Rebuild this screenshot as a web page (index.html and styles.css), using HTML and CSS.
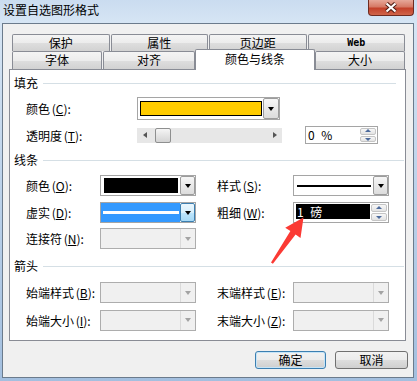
FILE: index.html
```html
<!DOCTYPE html>
<html lang="zh-CN">
<head>
  <meta charset="UTF-8">
  <meta name="viewport" content="width=device-width, initial-scale=1.0">
  <title>设置自选图形格式</title>
  <link rel="stylesheet" href="styles.css">
</head>
<body>

<div class="window">
  <!-- Title Bar -->
  <div class="titlebar">
    <span class="title">设置自选图形格式</span>
    <span class="close-btn">
      <svg width="14" height="11" viewBox="0 0 14 11">
        <path d="M2.5 1.5 L11.5 9.5 M11.5 1.5 L2.5 9.5" stroke="#4e1d14" stroke-width="4.2"/>
        <path d="M2.5 1.5 L11.5 9.5 M11.5 1.5 L2.5 9.5" stroke="#fff" stroke-width="2.2"/>
      </svg>
    </span>
  </div>

  <div class="client">
    <!-- Tabs -->
    <div class="tabs">
      <div class="tab-row back">
        <div class="tab">保护</div>
        <div class="tab">属性</div>
        <div class="tab">页边距</div>
        <div class="tab tab-web">Web</div>
      </div>
      <div class="tab-row front">
        <div class="tab tab-sm">字体</div>
        <div class="tab tab-md">对齐</div>
        <div class="tab tab-active">颜色与线条</div>
        <div class="tab tab-sm">大小</div>
      </div>
    </div>

    <!-- Tab Panel -->
    <div class="panel">
      <!-- Fill -->
      <div class="group-title narrow">填充</div>
      <div class="row fill-color">
        <label class="label-wide">颜色 (<u>C</u>):</label>
        <div class="combo combo-wide">
          <div class="value"><div class="swatch yellow"></div></div>
          <div class="drop"></div>
        </div>
      </div>
      <div class="row fill-alpha">
        <label class="label-wide">透明度 (<u>T</u>):</label>
        <div class="slider">
          <span class="arrow-left"></span>
          <span class="thumb"></span>
          <span class="arrow-right"></span>
        </div>
        <div class="spin spin-pct">
          <div class="spin-text">0 %</div>
          <div class="spin-btns"><span class="up"></span><span class="down"></span></div>
        </div>
      </div>

      <!-- Line -->
      <div class="group-title line-title">线条</div>
      <div class="row row-o">
        <label class="label">颜色 (<u>O</u>):</label>
        <div class="combo">
          <div class="value"><div class="swatch black"></div></div>
          <div class="drop"></div>
        </div>
        <label class="label label-right">样式 (<u>S</u>):</label>
        <div class="combo">
          <div class="value value-line"><div class="solid-line"></div></div>
          <div class="drop"></div>
        </div>
      </div>
      <div class="row row-d">
        <label class="label">虚实 (<u>D</u>):</label>
        <div class="combo combo-focus">
          <div class="value"><div class="dash-line"></div></div>
          <div class="drop"></div>
        </div>
        <label class="label label-right">粗细 (<u>W</u>):</label>
        <div class="spin spin-weight">
          <div class="spin-text"><span class="selected-text">1 磅</span></div>
          <div class="spin-btns"><span class="up"></span><span class="down"></span></div>
        </div>
      </div>
      <div class="row row-n">
        <label class="label">连接符 (<u>N</u>):</label>
        <div class="combo disabled">
          <div class="value"></div>
          <div class="drop"></div>
        </div>
      </div>

      <!-- Arrows -->
      <div class="group-title arrows-title">箭头</div>
      <div class="row row-b">
        <label class="label">始端样式 (<u>B</u>):</label>
        <div class="combo disabled"><div class="value"></div><div class="drop"></div></div>
        <label class="label label-right">末端样式 (<u>E</u>):</label>
        <div class="combo disabled"><div class="value"></div><div class="drop"></div></div>
      </div>
      <div class="row row-i">
        <label class="label">始端大小 (<u>I</u>):</label>
        <div class="combo disabled"><div class="value"></div><div class="drop"></div></div>
        <label class="label label-right">末端大小 (<u>Z</u>):</label>
        <div class="combo disabled"><div class="value"></div><div class="drop"></div></div>
      </div>
    </div>

    <!-- Dialog Buttons -->
    <div class="buttons">
      <button class="btn btn-default">确定</button>
      <button class="btn btn-cancel">取消</button>
    </div>
  </div>

  <!-- Red annotation arrow -->
  <svg class="annotation" width="417" height="381" viewBox="0 0 417 381">
    <polygon points="303.5,217.5 300.5,238 295.6,234.6 272.9,263.8 271,262.4 290.4,231 285.2,227.8" fill="#fb3a34"/>
  </svg>
</div>

</body>
</html>
```

FILE: styles.css
```css
/* Global */
body {
  margin: 0;
  font-family: "Noto Sans CJK SC", "Noto Sans", sans-serif;
  font-size: 12px;
  color: #000;
}

u {
  text-decoration: underline;
}

/* Window Frame */
.window {
  position: relative;
  width: 417px;
  height: 381px;
  box-sizing: border-box;
  padding: 0 3px 3px 2px;
  background: linear-gradient(to bottom, #cadcf0 0%, #d6e5f4 6%, #bcd2ea 50%, #a3bfdf 100%);
  display: flex;
  flex-direction: column;
}

.titlebar {
  height: 23px;
  display: flex;
  align-items: flex-start;
}

.title {
  padding: 3px 0 0 1px;
  line-height: 14px;
}

.close-btn {
  margin-left: auto;
  width: 46px;
  height: 16px;
  box-sizing: border-box;
  border: 1px solid #6e2b20;
  border-top: none;
  border-radius: 0 0 4px 4px;
  background: linear-gradient(to bottom, #e6a899 0%, #d67a66 45%, #c3412a 55%, #d0654a 100%);
  display: flex;
  align-items: center;
  justify-content: center;
}

/* Client Area */
.client {
  flex: 1;
  border: 1px solid #6b7b8c;
  background: #f0f0f0;
  padding: 10px 5px 0 6px;
}

/* Tabs */
.tabs {
  width: 393px;
  margin-left: 3px;
}

.tab-row {
  display: flex;
  align-items: flex-start;
}

.tab {
  box-sizing: border-box;
  border: 1px solid #898c95;
  border-bottom: none;
  border-radius: 2px 2px 0 0;
  background: linear-gradient(to bottom, #f4f4f4 0%, #ececec 50%, #dedede 51%, #d2d2d2 100%);
  text-align: center;
}

.back {
  gap: 1px;
}

.back .tab {
  flex: 1;
  height: 17px;
  line-height: 15px;
}

.tab-web {
  font-family: "DejaVu Sans Mono", monospace;
  font-size: 10px;
  font-weight: bold;
}

.front .tab {
  height: 18px;
  line-height: 16px;
}

.tab-sm { width: 90px; }
.tab-md { width: 92px; margin-left: 1px; }

.front .tab-active {
  position: relative;
  z-index: 1;
  width: 120px;
  height: 21px;
  margin: -2px 0 -1px;
  padding-top: 2px;
  background: #fff;
  line-height: 14px;
}

/* Panel */
.panel {
  box-sizing: border-box;
  height: 272px;
  margin-right: 2px;
  border: 1px solid #898c95;
  background: #fff;
  padding-top: 6px;
}

.group-title {
  display: flex;
  align-items: center;
  height: 14px;
  line-height: 14px;
  padding-left: 4px;
}

.group-title::after {
  content: "";
  flex: 1;
  height: 1px;
  margin: 0 1px 0 5px;
  background: #d5dfe5;
}

.group-title.narrow::after {
  margin-right: 9px;
}

/* Rows */
.row {
  display: flex;
  align-items: center;
  padding-left: 16px;
  height: 21px;
  word-spacing: -1px;
}

.label { width: 74px; }
.label-wide { width: 111px; }
.label-right { width: 76px; margin-left: 21px; }

.fill-color { margin-top: 7px; height: 23px; }
.fill-alpha { margin-top: 6px; height: 18px; }
.line-title { margin-top: 9px; }
.row-o { margin-top: 8px; }
.row-d { margin-top: 6px; }
.row-n { margin-top: 5px; }
.arrows-title { margin-top: 10px; }
.row-b { margin-top: 9px; }
.row-i { margin-top: 6px; height: 22px; }

/* Combo Boxes */
.combo {
  display: flex;
  box-sizing: border-box;
  width: 96px;
  height: 21px;
  border: 1px solid #a5a5a5;
  background: #fff;
}

.combo-wide {
  width: 143px;
  height: 23px;
}

.combo .value {
  flex: 1;
  display: flex;
  padding: 2px 2px 2px 3px;
}

.combo-wide .value {
  padding: 3px 1px 3px 2px;
}

.swatch {
  flex: 1;
  box-sizing: border-box;
  border: 1px solid #000;
}

.swatch.yellow { background: #ffcc00; }
.swatch.black { background: #000; }

.drop {
  position: relative;
  box-sizing: border-box;
  width: 15px;
  border: 1px solid #9c9c9c;
  border-radius: 2px;
  background: linear-gradient(to bottom, #f6f6f6 0%, #e9e9e9 50%, #dcdcdc 100%);
}

.combo-wide .drop {
  width: 16px;
}

.drop::after {
  content: "";
  position: absolute;
  left: 50%;
  top: 50%;
  margin: -2px 0 0 -3px;
  border-left: 3.5px solid transparent;
  border-right: 3.5px solid transparent;
  border-top: 4px solid #000;
}

.value-line {
  align-items: center;
}

.solid-line {
  flex: 1;
  height: 2px;
  background: #000;
}

/* Focused combo (dash style) */
.combo-focus .value {
  padding: 0;
  align-items: center;
  background: #3399ff;
}

.dash-line {
  flex: 1;
  height: 3px;
  margin: 0 1px 0 2px;
  background: #fff;
}

.combo-focus .drop {
  border-color: #3c7fb1;
  background: linear-gradient(to bottom, #eaf6fd 0%, #d9f0fc 50%, #bee6fd 51%, #a7d9f5 100%);
}

/* Disabled combo */
.combo.disabled {
  border-color: #adadad;
  background: #f0f0f0;
}

.combo.disabled .drop {
  border: none;
  border-left: 1px solid #dadada;
  border-radius: 0;
  background: #f0f0f0;
}

.combo.disabled .drop::after {
  border-top-color: #a3a3a3;
}

/* Slider */
.slider {
  display: flex;
  align-items: center;
  box-sizing: border-box;
  width: 145px;
  height: 15px;
  background: #e7e7e7;
  padding-left: 6px;
}

.arrow-left {
  border-top: 3.5px solid transparent;
  border-bottom: 3.5px solid transparent;
  border-right: 4px solid #555;
}

.thumb {
  box-sizing: border-box;
  width: 16px;
  height: 15px;
  margin-left: 8px;
  border: 1px solid #8e8f8f;
  border-radius: 2px;
  background: linear-gradient(to bottom, #f5f5f5 0%, #e4e4e4 50%, #d4d4d4 100%);
}

.arrow-right {
  margin: 0 5px 0 auto;
  border-top: 3.5px solid transparent;
  border-bottom: 3.5px solid transparent;
  border-left: 4px solid #555;
}

/* Spin Boxes */
.spin {
  display: flex;
  box-sizing: border-box;
  border: 1px solid #a5a5a5;
  background: #fff;
  word-spacing: 4px;
}

.spin-pct {
  width: 73px;
  height: 18px;
  margin-left: 23px;
}

.spin-weight {
  width: 96px;
  height: 21px;
}

.spin-text {
  flex: 1;
  line-height: 16px;
  padding-left: 2px;
}

.spin-weight .spin-text {
  padding: 1px 1px 1px 2px;
  display: flex;
}

.selected-text {
  flex: 1;
  background: #000;
  color: #fff;
  line-height: 15px;
  padding-left: 1px;
  height: 15px;
}

.spin-btns {
  display: flex;
  flex-direction: column;
  width: 16px;
  padding: 1px 1px 1px 0;
  gap: 1px;
}

.spin-btns span {
  position: relative;
  flex: 1;
  border: 1px solid #c5c5c5;
  border-radius: 2px;
  background: linear-gradient(to bottom, #f7f7f7, #e3e3e3);
}

.spin-btns span::after {
  content: "";
  position: absolute;
  left: 50%;
  top: 50%;
  margin-left: -3px;
  border-left: 3px solid transparent;
  border-right: 3px solid transparent;
}

.spin-btns .up::after {
  margin-top: -2px;
  border-bottom: 3px solid #4d6b9c;
}

.spin-btns .down::after {
  margin-top: -1px;
  border-top: 3px solid #4d6b9c;
}

/* Dialog Buttons */
.buttons {
  display: flex;
  justify-content: flex-end;
  gap: 9px;
  margin-top: 10px;
}

.btn {
  box-sizing: border-box;
  height: 18px;
  padding: 0;
  font-family: inherit;
  font-size: 12px;
  line-height: 14px;
  color: #000;
  border: 1px solid #707070;
  border-radius: 3px;
  background: linear-gradient(to bottom, #f2f2f2 0%, #ebebeb 50%, #dddddd 51%, #cfcfcf 100%);
}

.btn-default {
  width: 71px;
  border-color: #3c7fb1;
  box-shadow: inset 0 0 0 1px #c6e4f7;
}

.btn-cancel {
  width: 73px;
}

/* Annotation overlay */
.annotation {
  position: absolute;
  left: 0;
  top: 0;
  pointer-events: none;
}
```
